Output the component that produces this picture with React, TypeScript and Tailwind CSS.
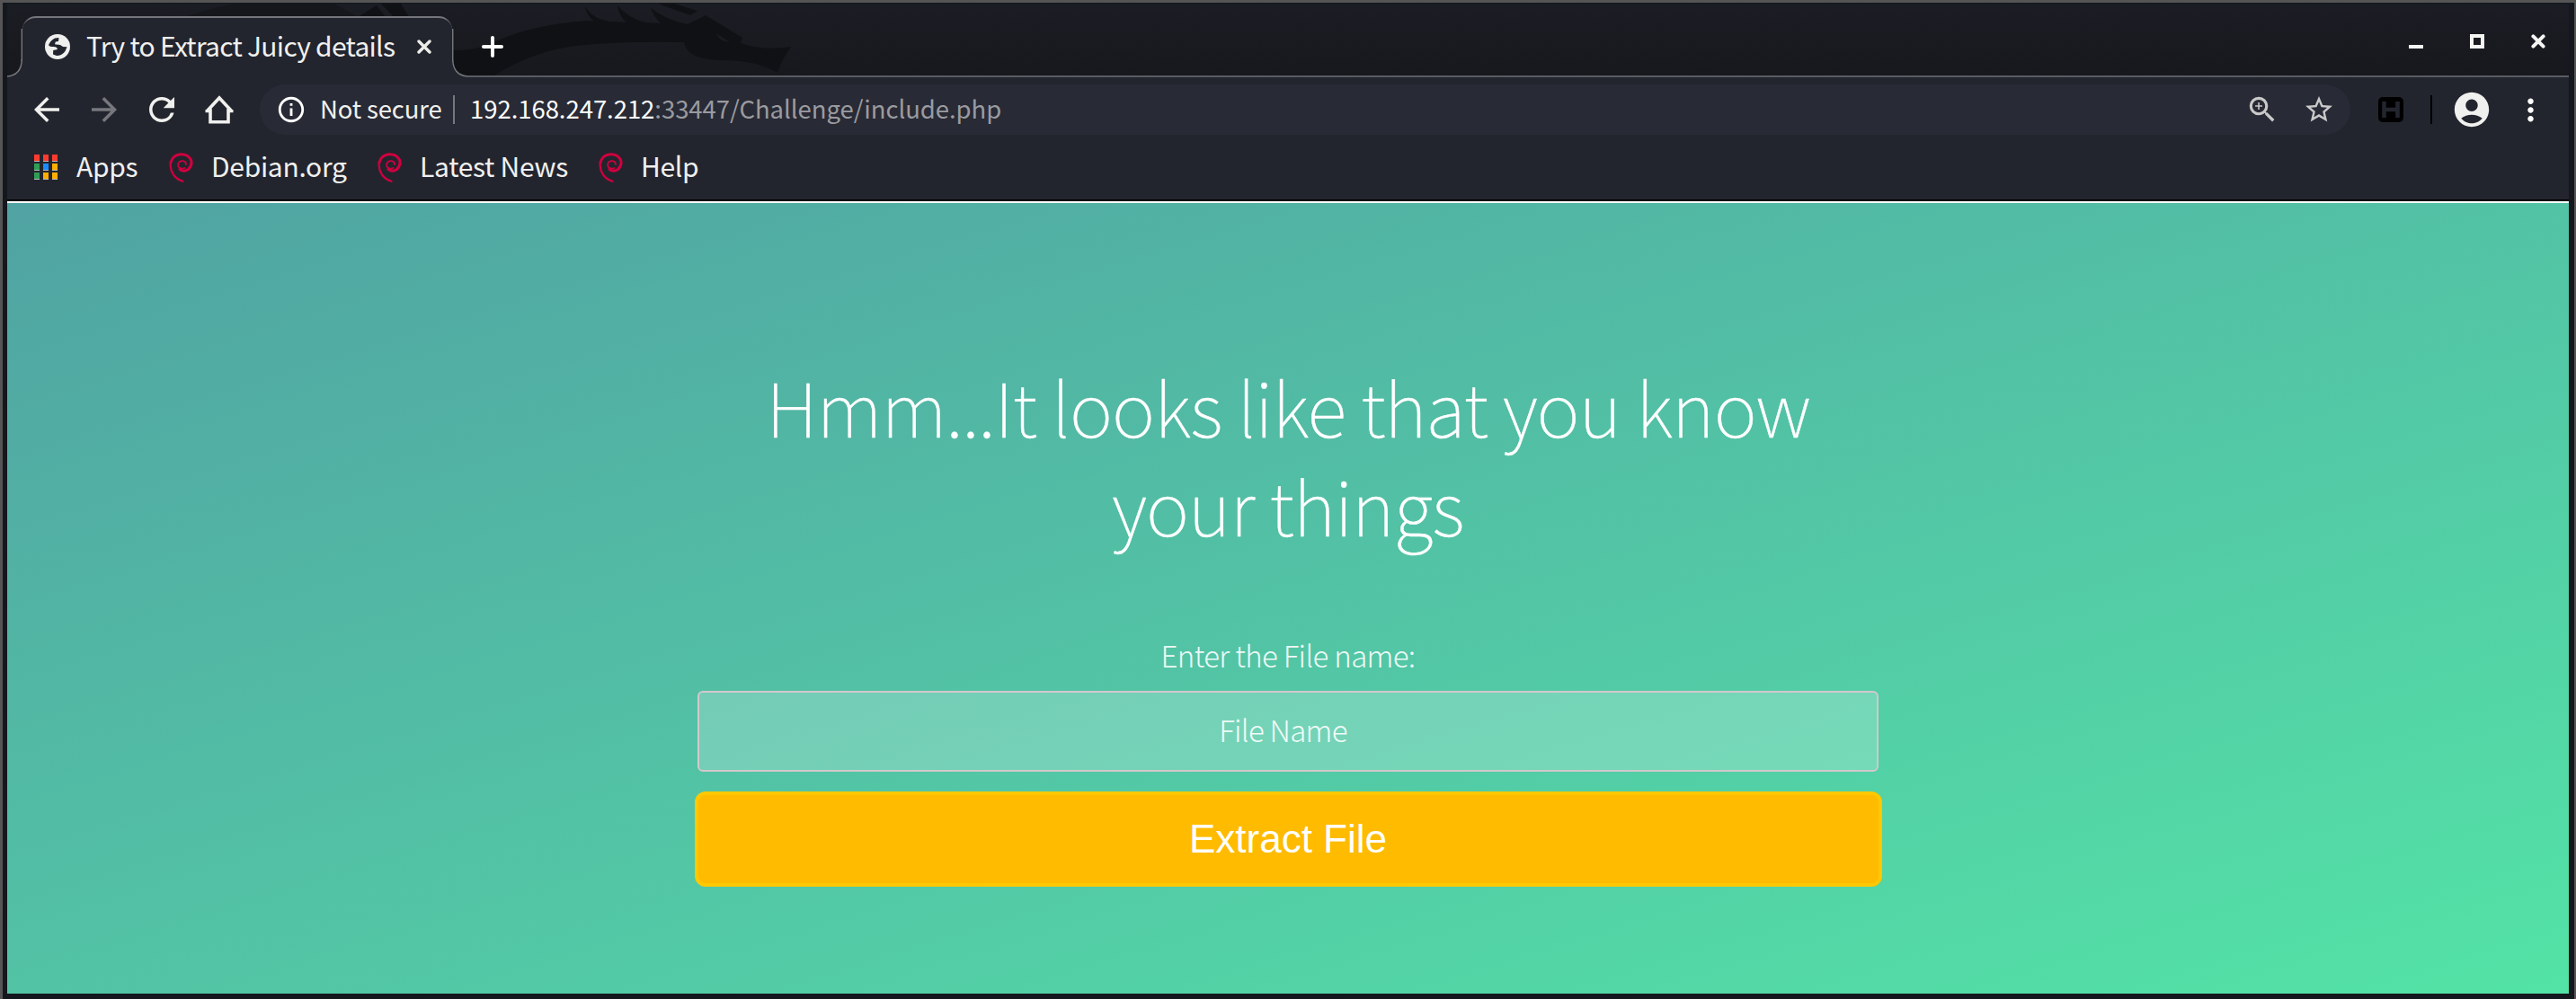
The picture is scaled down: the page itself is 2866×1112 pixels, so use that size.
import type { ReactNode } from 'react';
import {
  MdArrowBack,
  MdArrowForward,
  MdRefresh,
  MdInfoOutline,
  MdZoomIn,
  MdStarBorder,
  MdAccountCircle,
  MdMoreVert,
} from 'react-icons/md';

function Dragon() {
  return (
    <svg className="absolute left-0 top-0" width="900" height="80" viewBox="8 4 900 80" fill="#101115">
      <path d="M205 20 Q235 8 262 4 L372 4 L400 20Z" opacity="0.45" />
      <path d="M398 19 L419 6 L429 19Z M424 4 H446 L455 19 H438Z" />
      <path d="M490 54 Q520 60 548 48 Q590 27 655 23 Q664 24 660 23 Q652 16 651 7 Q660 22 680 24 L697 25 Q688 17 687 6 Q700 21 718 25 L735 26 Q727 18 724 9 Q742 23 765 27 L785 17 L826 42 L824 48 Q850 57 880 52 Q870 66 865 81 Q840 66 800 67 Q764 66 761 47 Q690 46 640 51 Q590 58 550 84 H490Z" />
      <path d="M732 4 H750 L776 12 L768 17Z" />
      <path d="M797 37 L812 47 Q799 46 797 37Z" fill="#1a1b21" />
    </svg>
  );
}

function Globe() {
  return (
    <svg width="28" height="28" viewBox="0 0 28 28">
      <circle cx="14" cy="14" r="14" fill="#efefed" />
      <path
        d="M15.5 4 L11 4.4 Q6 7 4 12.2 Q6 14.6 9.5 14 Q14 14.2 13.8 17 L9.2 18 L9 22.6 L13 24 Q19 24 22.5 19 L24.6 14.2 L20 14 L17 12 L11 11.3 L11.8 8.6 L15 8Z"
        fill="#23252e"
      />
    </svg>
  );
}

function Home() {
  return (
    <svg width="32" height="32" viewBox="0 0 32 32" fill="none" stroke="#f0f0ee" strokeWidth="3.6">
      <path d="M2 18 L16 3 L30 18 M6 15 V29.8 H26 V15" />
      <path d="M0.5 17.8 H7 M25 17.8 H31.5" strokeWidth="3" />
    </svg>
  );
}

function Swirl() {
  return (
    <svg className="mr-[20px] shrink-0" width="27" height="33" viewBox="0 0 27 33" fill="none" stroke="#d1003f" strokeLinecap="round">
      <path
        d="M17.5 17 Q12.5 19 10.5 15.5 Q9 10.5 14 9.2 Q19 9 19 13"
        strokeWidth="1.8"
      />
      <path d="M12 18.5 Q16.5 22 21.5 18.5 Q26.5 13.5 24.5 8 Q21 1.5 13 1.8 Q4 2.5 2 11" strokeWidth="3" />
      <path d="M2 10 Q0.5 17.5 5 24.5 Q9 30 15.5 31.8" strokeWidth="2.2" />
    </svg>
  );
}

function HackBadge() {
  return (
    <svg width="28" height="28" viewBox="0 0 28 28">
      <rect width="28" height="28" rx="5" fill="#000" />
      <path d="M6.5 5 V23 M21.5 5 V23 M7 14 H21" stroke="#23252e" strokeWidth="4.6" fill="none" />
    </svg>
  );
}

const appColors = [
  'bg-[#ff3b30]', 'bg-[#ff3b30]', 'bg-[#ff3b30]',
  'bg-[#2f9e55]', 'bg-[#1a8cff]', 'bg-[#ffae00]',
  'bg-[#2f9e55]', 'bg-[#ffae00]', 'bg-[#ffae00]',
];

function AppsGrid() {
  return (
    <div className="grid w-[26px] grid-cols-3 gap-x-1 gap-y-[2px]">
      {appColors.map((c, i) => (
        <span key={i} className={`h-2 w-[6px] border-b border-[#b9b9b9] ${c}`} />
      ))}
    </div>
  );
}

function Bookmark({ icon, label, box }: { icon: ReactNode; label: string; box: string }) {
  return (
    <div className={`flex items-center ${box}`}>
      {icon}
      <span className="-mt-[5px] whitespace-nowrap text-[30px] leading-none tracking-[-0.3px]">{label}</span>
    </div>
  );
}

function TabStrip() {
  return (
    <div className="relative flex h-[82px] shrink-0 bg-linear-to-b from-[#1b1d24] to-[#17181d]">
      <Dragon />
      <svg className="relative shrink-0" width="17" height="82" viewBox="0 0 17 82">
        <path d="M0 81 Q16.5 79 17 62 V82 H0Z" fill="#23252e" />
        <path d="M0 81 Q16 79.5 16.3 62" fill="none" stroke="#75767b" strokeWidth="1.5" />
        <path d="M16.3 64 V28" stroke="#75767b" strokeWidth="1.4" />
      </svg>
      <div className="relative mt-[14px] flex w-[478px] items-center rounded-t-[15px] border-t-2 border-[#75767b] bg-[#23252e] pb-[2px] pl-[25px] pr-[23px]">
        <Globe />
        <span className="ml-[18px] mt-[-5px] whitespace-nowrap text-[30px] leading-none tracking-[-0.72px]">
          Try to Extract Juicy details
        </span>
        <svg className="ml-auto" width="16" height="16" viewBox="0 0 16 16" stroke="#ecece8" strokeWidth="3.4" strokeLinecap="round">
          <path d="M2 2 L14 14 M14 2 L2 14" />
        </svg>
      </div>
      <svg className="relative shrink-0" width="17" height="82" viewBox="0 0 17 82">
        <path d="M17 81 Q0.5 79 0 62 V82 H17Z" fill="#23252e" />
        <path d="M17 81 Q1 79.5 0.7 62 V28" fill="none" stroke="#75767b" strokeWidth="1.5" />
      </svg>
      <div className="relative flex flex-1 items-start border-b-2 border-[#5b5c62]">
        <svg className="ml-[16px] mt-[36px]" width="24" height="24" viewBox="0 0 24 24" stroke="#fff" strokeWidth="4" strokeLinecap="round">
          <path d="M12 2 V22 M2 12 H22" />
        </svg>
        <div className="ml-auto mr-[26px] mt-[34px] flex h-4 items-end gap-[52px]">
          <span className="h-1 w-4 bg-[#f4f4f2]" />
          <span className="h-4 w-4 border-4 border-[#f4f4f2]" />
          <svg width="16" height="16" viewBox="0 0 16 16" stroke="#f4f4f2" strokeWidth="4" strokeLinecap="round">
            <path d="M2.4 2.4 L13.6 13.6 M13.6 2.4 L2.4 13.6" />
          </svg>
        </div>
      </div>
    </div>
  );
}

function Toolbar() {
  return (
    <div className="flex h-[72px] shrink-0 items-center">
      <MdArrowBack className="ml-[23px] shrink-0" size={42} />
      <MdArrowForward className="ml-[22px] shrink-0 text-[#77787d]" size={42} />
      <MdRefresh className="ml-[22px] shrink-0" size={42} />
      <div className="ml-[27px] shrink-0">
        <Home />
      </div>
      <div className="ml-[29px] flex h-14 w-[2326px] shrink-0 items-center rounded-full bg-[#282a35] pl-[18px] text-[27.5px]">
        <MdInfoOutline className="text-white" size={34} />
        <span className="-mt-[2px] ml-[15px] w-[148px] whitespace-nowrap leading-none tracking-[-0.15px]">Not secure</span>
        <span className="h-8 w-[2px] bg-[#77787d]" />
        <span className="-mt-[2px] ml-[17px] whitespace-nowrap leading-none tracking-[-0.05px] text-[#9a9ba0]">
          <span className="text-white">192.168.247.212</span>:33447/Challenge/include.php
        </span>
        <MdZoomIn className="ml-auto text-[#c9c9c9]" size={38} />
        <MdStarBorder className="ml-[26px] mr-[17px] text-[#c9c9c9]" size={36} />
      </div>
      <div className="ml-[31px]">
        <HackBadge />
      </div>
      <span className="ml-[30px] h-8 w-[2px] bg-black" />
      <MdAccountCircle className="ml-[21px] shrink-0" size={46} />
      <MdMoreVert className="ml-[23px] shrink-0 text-white" size={39} />
    </div>
  );
}

function Bookmarks() {
  return (
    <div className="flex h-[56px] shrink-0 items-center">
      <Bookmark box="w-[150px] ml-[30px] gap-[21px]" icon={<AppsGrid />} label="Apps" />
      <Bookmark box="w-[232px]" icon={<Swirl />} label="Debian.org" />
      <Bookmark box="w-[246px]" icon={<Swirl />} label="Latest News" />
      <Bookmark box="w-[200px]" icon={<Swirl />} label="Help" />
    </div>
  );
}

function Page() {
  return (
    <main className="flex flex-1 flex-col items-center border-t-2 border-white bg-linear-to-br from-[#50a3a2] to-[#53e3a6] text-white">
      <h1 className="mt-[171px] w-[1320px] text-center text-[82px] font-thin leading-[110px] tracking-[-0.95px] [-webkit-text-stroke:0.5px_white]">
        Hmm...It looks like that you know your things
      </h1>
      <label className="mt-[94px] h-[36px] text-[33px] font-light leading-[36px] tracking-[-0.65px] text-white/90">
        Enter the File name:
      </label>
      <div className="mt-[22px] flex h-[90px] w-[1314px] items-center justify-center rounded-md border-2 border-[#d3c8cb] bg-white/20 pb-[4px] pr-[11px] text-[33px] font-light leading-none tracking-[-0.7px] text-white/90">
        File Name
      </div>
      <button className="mt-[22px] h-[106px] w-[1321px] rounded-xl border-4 border-[#ffc800] bg-[#ffbb00] font-['Liberation_Sans',sans-serif] text-[44px] leading-none">
        Extract File
      </button>
    </main>
  );
}

export default function App() {
  return (
    <div className="relative flex h-[1112px] w-[2866px] flex-col overflow-hidden border-l-[3px] border-r-2 border-t-[3px] border-[#555] bg-[#14171e] pb-[6px] pl-[5px] pr-[6px] pt-[1px] font-['Noto_Sans_CJK_SC','Noto_Sans',sans-serif] text-[#f0f0ee]">
      <TabStrip />
      <div className="flex h-[138px] shrink-0 flex-col border-b-2 border-black bg-[#23252e]">
        <Toolbar />
        <Bookmarks />
      </div>
      <Page />
    </div>
  );
}
